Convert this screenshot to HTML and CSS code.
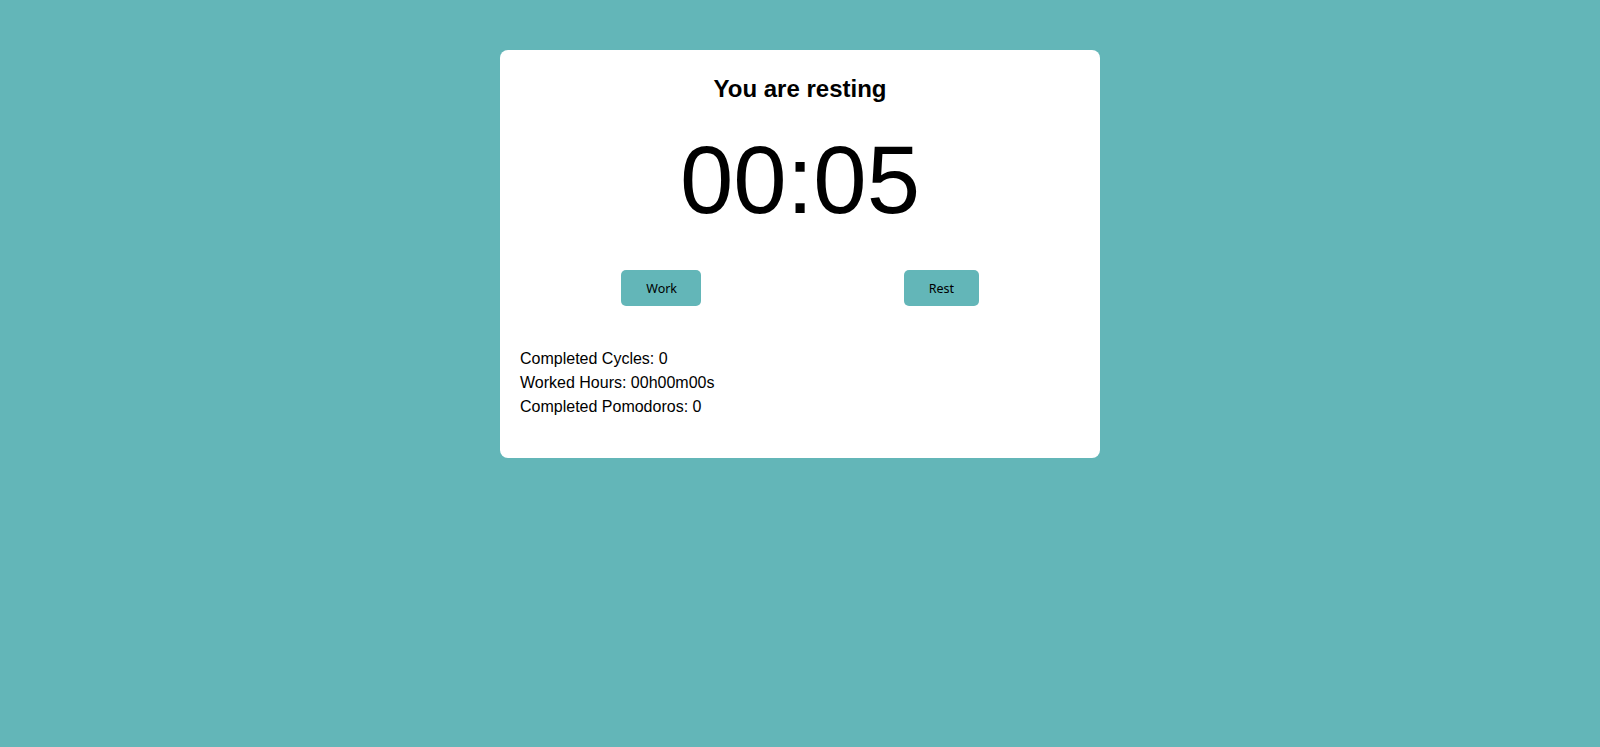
FILE: index.html
```html
<!DOCTYPE html>
<html>
<head>
<meta charset="utf-8">
<link rel="stylesheet" href="styles.css">
</head>
<body>
<div class="card">
  <h2 class="title">You are resting</h2>
  <div class="timer">00:05</div>
  <div class="buttons">
    <button class="btn btn-work">Work</button>
    <button class="btn btn-rest">Rest</button>
  </div>
  <div class="stats">
    <div class="stat">Completed Cycles: 0</div>
    <div class="stat">Worked Hours: 00h00m00s</div>
    <div class="stat">Completed Pomodoros: 0</div>
  </div>
</div>
</body>
</html>
```
FILE: styles.css
```css
html, body {
  margin: 0;
  padding: 0;
}
body {
  background: #63b6b8;
  font-family: "Liberation Sans", Arial, sans-serif;
  color: #000;
  height: 747px;
  padding-top: 50px;
  box-sizing: border-box;
}
.card {
  width: 600px;
  margin: 0 auto;
  background: #fff;
  border-radius: 8px;
  padding: 25px 20px 39px;
  box-sizing: border-box;
}
.title {
  margin: 0;
  font-size: 24px;
  line-height: 27px;
  font-weight: bold;
  text-align: center;
}
.timer {
  margin-top: 24px;
  font-size: 96px;
  line-height: 107px;
  text-align: center;
}
.buttons {
  margin-top: 37px;
  display: flex;
  justify-content: space-around;
}
.btn {
  background: #63b6b8;
  border: none;
  border-radius: 5px;
  height: 36px;
  padding: 1px 25px 0;
  font-family: "Noto Sans", "Open Sans", sans-serif;
  font-size: 12.5px;
  color: #000;
}
.btn-work { width: 80px; }
.btn-rest { width: 75px; }
.stats {
  margin-top: 41px;
}
.stat {
  font-size: 16px;
  line-height: 24px;
}
```
